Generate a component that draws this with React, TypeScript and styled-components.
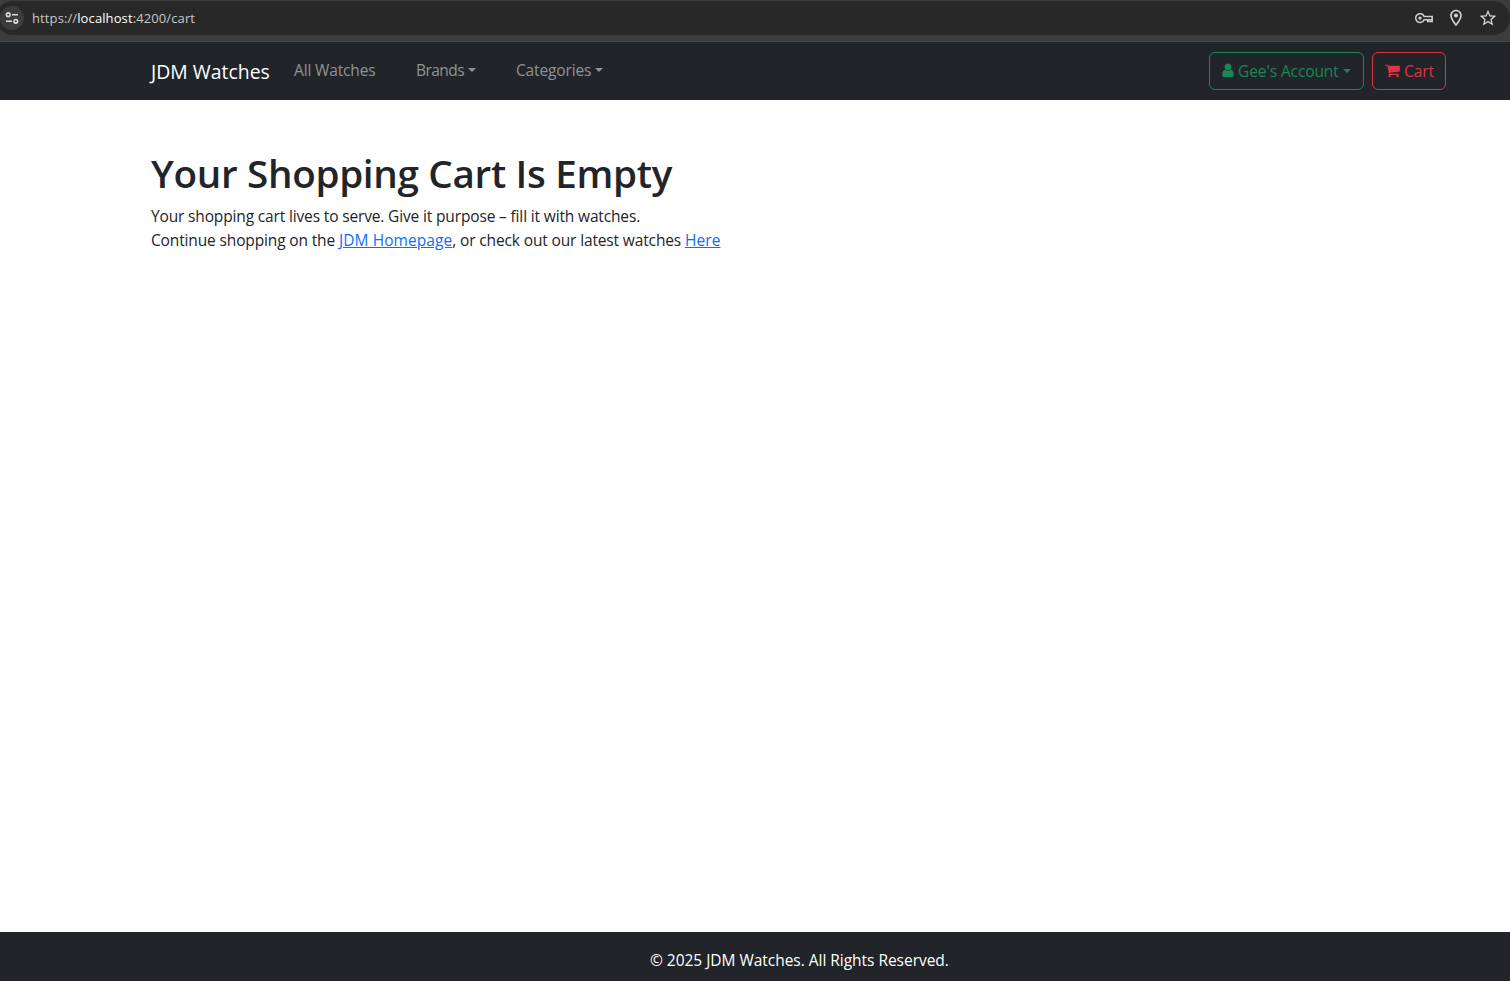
import React from "react";
import styled, { createGlobalStyle } from "styled-components";
import { MdStarBorder, MdOutlineLocationOn } from "react-icons/md";

const GlobalStyle = createGlobalStyle`
  * { box-sizing: border-box; }
  body {
    margin: 0;
    background: #fff;
    color: #212529;
    font: 400 15.5px/24px "Segoe UI", "Open Sans", "Noto Sans", sans-serif;
  }
`;

const Page = styled.div`
  display: flex;
  flex-direction: column;
  height: 981px;
`;

const BrowserBar = styled.div`
  height: 42px;
  padding: 1px 0 6px;
  background: #3c3c3c;
  border-bottom: 1px solid #484848;
`;

const AddressField = styled.div`
  display: flex;
  align-items: center;
  height: 34px;
  margin-left: -4px;
  padding: 0 12px 0 4px;
  border-radius: 17px;
  background: #282828;
`;

const SiteButton = styled.span`
  display: grid;
  place-items: center;
  width: 24px;
  height: 24px;
  border-radius: 50%;
  background: #3c3c3c;
  color: #dcdcdc;
`;

const Url = styled.span`
  margin-left: 8px;
  color: #c7c7c7;
  font-size: 13px;
  letter-spacing: 0.11px;
  b { font-weight: 400; color: #fff; }
`;

const FieldActions = styled.span`
  display: flex;
  align-items: center;
  gap: 12px;
  margin-left: auto;
  color: #d0d0d0;
  svg { display: block; }
`;

const Navbar = styled.nav`
  display: flex;
  align-items: center;
  height: 58px;
  padding: 0 64px 0 151px;
  background: #212529;
`;

const Brand = styled.a`
  width: 119px;
  margin-right: 24px;
  padding-top: 2px;
  color: #fff;
  font-size: 19.4px;
  line-height: 30px;
  letter-spacing: 0.02px;
  white-space: nowrap;
`;

const NavLink = styled.a<{ $width: number; $spacing?: number }>`
  display: flex;
  align-items: center;
  width: ${(p) => p.$width}px;
  margin: 0 40px 2px 0;
  color: #909294;
  letter-spacing: ${(p) => p.$spacing ?? -0.15}px;
  white-space: nowrap;
`;

const Caret = styled.span`
  margin-left: 4px;
  border: 4.8px solid transparent;
  border-top-color: currentColor;
  border-bottom: 0;
`;

const NavActions = styled.div`
  display: flex;
  gap: 8px;
  margin-left: auto;
`;

const OutlineButton = styled.button<{ $color: string; $width: number }>`
  display: flex;
  align-items: center;
  width: ${(p) => p.$width}px;
  height: 38px;
  padding: 0 12px;
  border: 1px solid ${(p) => p.$color};
  border-radius: 6px;
  background: transparent;
  color: ${(p) => p.$color};
  font: inherit;
  letter-spacing: -0.1px;
  white-space: nowrap;
  svg { flex: none; margin: 0 4px 0 0; }
`;

const Main = styled.main`
  flex: 1;
  padding: 49px 151px 0;
`;

const Title = styled.h1`
  margin: 0 0 7px;
  font-size: 38.6px;
  font-weight: 550;
  line-height: 48px;
  letter-spacing: -0.3px;
`;

const Line = styled.p<{ $spacing: number }>`
  margin: 0;
  letter-spacing: ${(p) => p.$spacing}px;
  white-space: nowrap;
`;

const TextLink = styled.a`
  color: #0d6efd;
  text-decoration: underline;
  letter-spacing: 0.08px;
`;

const Footer = styled.footer`
  height: 49px;
  padding: 16px 0 0 650px;
  background: #212529;
  color: #fff;
  letter-spacing: -0.03px;
`;

const TuneIcon = () => (
  <svg width="14" height="14" viewBox="0 0 14 14" fill="none" stroke="currentColor" strokeWidth="1.6">
    <circle cx="3.2" cy="3.7" r="1.8" />
    <path d="M7 3.7h6M1 10.3h6" />
    <circle cx="10.8" cy="10.3" r="1.8" />
  </svg>
);

const KeyIcon = () => (
  <svg width="20" height="20" viewBox="0 0 20 20" fill="none" stroke="currentColor" strokeWidth="1.5">
    <path d="M10.1 8.4a4.4 4.4 0 1 0 0 3.4h3.6v1.8h4.5V8.4z" />
    <path d="M14 11.8h4" />
    <circle cx="6" cy="10.1" r="1.7" fill="currentColor" stroke="none" />
  </svg>
);

const UserIcon = () => (
  <svg width="12" height="16" viewBox="224 64 1344 1792" fill="currentColor">
    <path d="M1536 1399q0 109-62.5 187t-150.5 78h-854q-88 0-150.5-78t-62.5-187q0-85 8.5-160.5t31.5-152 58.5-131 94-89 134.5-34.5q131 128 313 128t313-128q76 0 134.5 34.5t94 89 58.5 131 31.5 152 8.5 160.5zm-256-887q0 159-112.5 271.5t-271.5 112.5-271.5-112.5-112.5-271.5 112.5-271.5 271.5-112.5 271.5 112.5 112.5 271.5z" />
  </svg>
);

const CartIcon = () => (
  <svg width="15" height="16" viewBox="64 64 1680 1792" fill="currentColor">
    <path d="M704 1536q0 52-38 90t-90 38-90-38-38-90 38-90 90-38 90 38 38 90zm896 0q0 52-38 90t-90 38-90-38-38-90 38-90 90-38 90 38 38 90zm128-1088v512q0 24-16.5 42.5t-40.5 21.5l-1044 122q13 60 13 70 0 16-24 64h920q26 0 45 19t19 45-19 45-45 19h-1024q-26 0-45-19t-19-45q0-11 8-31.5t16-36 21.5-40 15.5-29.5l-177-823h-204q-26 0-45-19t-19-45 19-45 45-19h256q16 0 28.5 6.5t19.5 15.5 13 24.5 8 26 5.5 29.5 4.5 26h1201q26 0 45 19t19 45z" />
  </svg>
);

export default function App() {
  return (
    <Page>
      <GlobalStyle />
      <BrowserBar>
        <AddressField>
          <SiteButton><TuneIcon /></SiteButton>
          <Url>https://<b>localhost</b>:4200/cart</Url>
          <FieldActions>
            <KeyIcon />
            <MdOutlineLocationOn size={20} />
            <MdStarBorder size={20} />
          </FieldActions>
        </AddressField>
      </BrowserBar>
      <Navbar>
        <Brand>JDM Watches</Brand>
        <NavLink $width={82}>All Watches</NavLink>
        <NavLink $width={60} $spacing={-0.55}>Brands<Caret /></NavLink>
        <NavLink $width={87}>Categories<Caret /></NavLink>
        <NavActions>
          <OutlineButton $color="#198754" $width={155}><UserIcon />Gee's Account<Caret /></OutlineButton>
          <OutlineButton $color="#dc3545" $width={74}><CartIcon />Cart</OutlineButton>
        </NavActions>
      </Navbar>
      <Main>
        <Title>Your Shopping Cart Is Empty</Title>
        <Line $spacing={-0.15}>Your shopping cart lives to serve. Give it purpose – fill it with watches.</Line>
        <Line $spacing={-0.14}>
          Continue shopping on the <TextLink>JDM Homepage</TextLink>, or check out our latest watches <TextLink>Here</TextLink>
        </Line>
      </Main>
      <Footer>© 2025 JDM Watches. All Rights Reserved.</Footer>
    </Page>
  );
}
